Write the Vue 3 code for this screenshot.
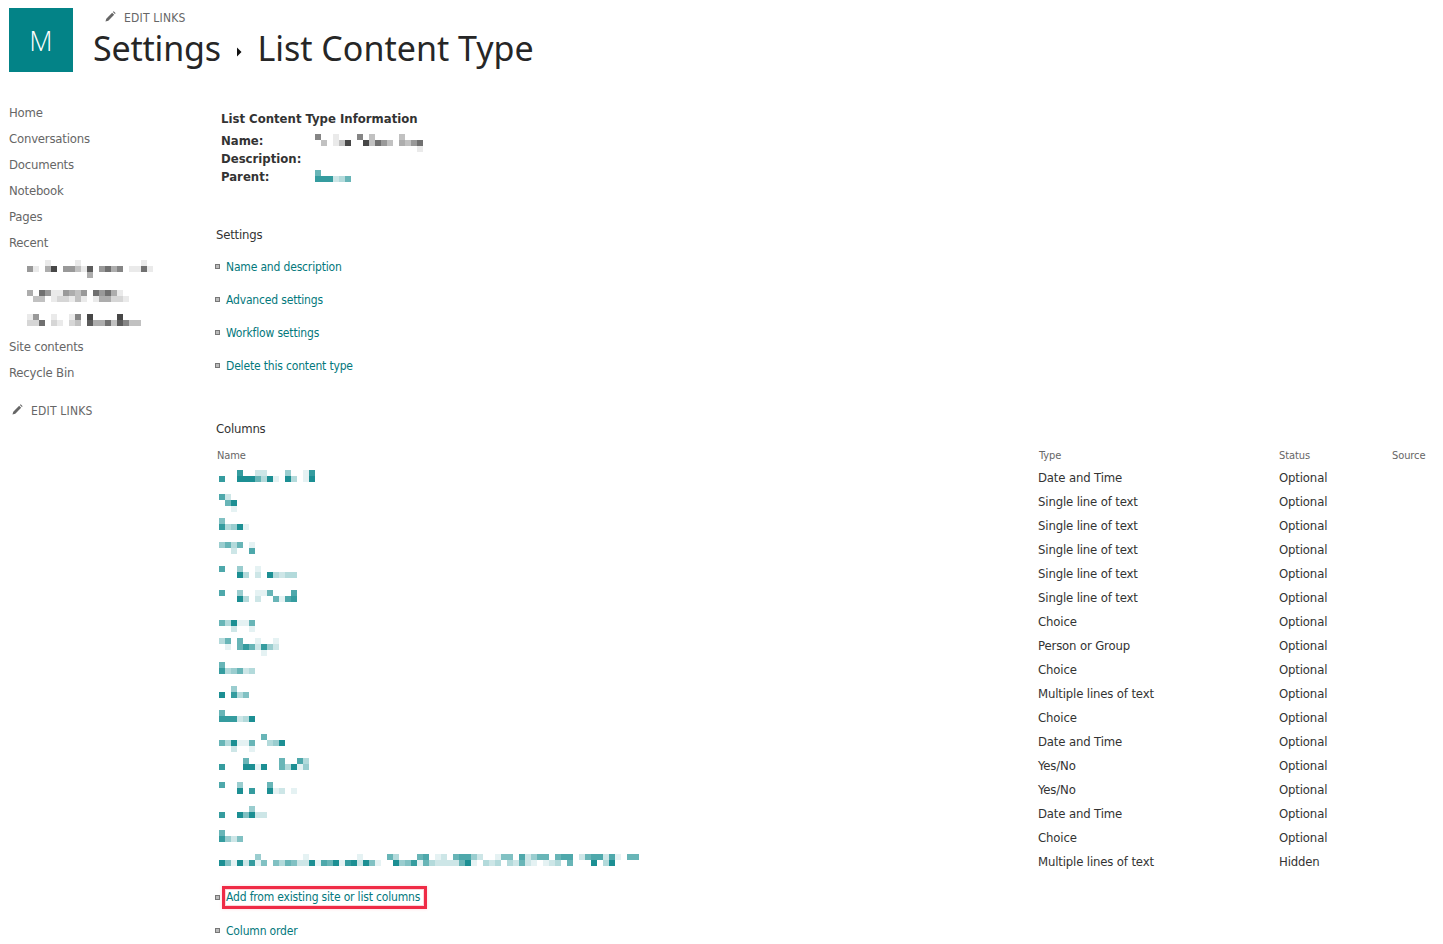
<template>
  <div class="page">
    <header class="top">
      <div class="logo">M</div>
      <div class="top-text">
        <div class="top-edit">
          <svg class="pencil" viewBox="0 0 12 12"><path d="M0.5 11.5 L1.4 8.4 L7.8 2 L10 4.2 L3.6 10.6 Z M8.6 1.2 L9.5 0.4 L11.6 2.5 L10.8 3.4 Z" /></svg>
          <span>EDIT LINKS</span>
        </div>
        <h1 class="title">
          <span class="title-first">Settings</span>
          <svg class="crumb" viewBox="0 0 6 10"><path d="M1 0.5 L5.5 5 L1 9.5 Z" /></svg>
          <span>List Content Type</span>
        </h1>
      </div>
    </header>

    <div class="body">
      <nav class="side">
        <a v-for="item in navTop" :key="item" class="side-link">{{ item }}</a>
        <div class="side-recent">
          <div v-for="(line, j) in recent" :key="j" class="px-line">
            <i v-for="(c, k) in line" :key="k" class="px" :style="{ background: pixel(c, '51,51,51') }"></i>
          </div>
        </div>
        <a v-for="item in navBottom" :key="item" class="side-link">{{ item }}</a>
        <div class="side-edit">
          <svg class="pencil" viewBox="0 0 12 12"><path d="M0.5 11.5 L1.4 8.4 L7.8 2 L10 4.2 L3.6 10.6 Z M8.6 1.2 L9.5 0.4 L11.6 2.5 L10.8 3.4 Z" /></svg>
          <span>EDIT LINKS</span>
        </div>
      </nav>

      <main class="content">
        <section class="info">
          <h2>List Content Type Information</h2>
          <div class="info-row">
            <b>Name:</b>
            <div class="px-block">
              <div v-for="(line, j) in nameBlur" :key="j" class="px-line">
                <i v-for="(c, k) in line" :key="k" class="px" :style="{ background: pixel(c, '51,51,51') }"></i>
              </div>
            </div>
          </div>
          <div class="info-row"><b>Description:</b></div>
          <div class="info-row">
            <b>Parent:</b>
            <div class="px-block">
              <div v-for="(line, j) in parentBlur" :key="j" class="px-line">
                <i v-for="(c, k) in line" :key="k" class="px" :style="{ background: pixel(c, '3,131,135') }"></i>
              </div>
            </div>
          </div>
        </section>

        <h3 class="section settings-head">Settings</h3>
        <ul class="links">
          <li v-for="l in settingsLinks" :key="l"><a>{{ l }}</a></li>
        </ul>

        <h3 class="section columns-head">Columns</h3>
        <table class="cols">
          <thead>
            <tr>
              <th class="c-name">Name</th>
              <th class="c-type">Type</th>
              <th class="c-status">Status</th>
              <th>Source</th>
            </tr>
          </thead>
          <tbody>
            <tr v-for="(row, i) in rows" :key="i">
              <td class="name-cell">
                <div v-for="(line, j) in row.name" :key="j" class="px-line">
                  <i v-for="(c, k) in line" :key="k" class="px" :style="{ background: pixel(c, '3,131,135') }"></i>
                </div>
              </td>
              <td>{{ row.type }}</td>
              <td>{{ row.status }}</td>
              <td></td>
            </tr>
          </tbody>
        </table>

        <ul class="links bottom-links">
          <li><a class="marked">Add from existing site or list columns</a></li>
          <li><a>Column order</a></li>
        </ul>
      </main>
    </div>
  </div>
</template>

<script setup>
const navTop = ['Home', 'Conversations', 'Documents', 'Notebook', 'Pages', 'Recent']
const navBottom = ['Site contents', 'Recycle Bin']
const settingsLinks = ['Name and description', 'Advanced settings', 'Workflow settings', 'Delete this content type']

// Names are pixelated in the source, one digit per 6px cell (opacity in tenths)
const recent = [
  '00010000100000000001',
  '510490553180574601171',
  '00000000004',
  '',
  '',
  '4075115435075741',
  '03301221310144221',
  '',
  '',
  '1500100160900009',
  '2270210230844738633'
]
const nameBlur = ['600100060300003', '030139009375304357', '000000000000000001']
const parentBlur = ['6', '888236']

const rows = [
  { name: ['0008002200040018', '8009996391093019'], type: 'Date and Time' },
  { name: ['72', '069', '001'], type: 'Single line of text' },
  { name: ['5', '83491'], type: 'Single line of text' },
  { name: ['463601', '002007'], type: 'Single line of text' },
  { name: ['7004001', '0009302093233'], type: 'Single line of text' },
  { name: ['7004001160007', '0009302006178'], type: 'Single line of text' },
  { name: ['0', '639116', '002001'], type: 'Choice' },
  { name: ['3606001001', '0106862842', '00000001'], type: 'Person or Group' },
  { name: ['6', '834623'], type: 'Choice' },
  { name: ['004', '90835'], type: 'Multiple lines of text' },
  { name: ['6', '888239'], type: 'Choice' },
  { name: ['00000006', '63911600349', '002001'], type: 'Date and Time' },
  { name: ['000060000060073', '800099190063914'], type: 'Yes/No' },
  { name: ['700400006', '0009080091201'], type: 'Yes/No' },
  { name: ['000004', '80095922'], type: 'Date and Time' },
  { name: ['6', '8425'], type: 'Choice' },
  {
    name: [
      '0000004000000010000000010000630006701206774200155072466067702677271066',
      '9519281505365229176918929510094581632222691032303262101230600090390'
    ],
    type: 'Multiple lines of text',
    status: 'Hidden'
  }
].map((r) => ({ status: 'Optional', ...r }))

function pixel(c, rgb) {
  return `rgba(${rgb},${Number(c) / 10})`
}
</script>

<style scoped>
.page {
  width: 1443px;
  height: 944px;
  overflow: hidden;
  background: #fff;
  font-family: 'DejaVu Sans', sans-serif;
  font-stretch: condensed;
  color: #333;
}

.top {
  display: flex;
  padding: 8px 0 0 9px;
  height: 96px;
  box-sizing: border-box;
}

.logo {
  width: 64px;
  height: 64px;
  background: #038387;
  color: #fff;
  font-family: 'Open Sans', sans-serif;
  font-stretch: normal;
  font-weight: 300;
  font-size: 27px;
  line-height: 66px;
  text-align: center;
}

.top-text {
  margin-left: 20px;
}

.top-edit,
.side-edit {
  display: flex;
  align-items: center;
  gap: 8px;
  font-size: 12px;
  letter-spacing: 0.2px;
  color: #666;
}

.top-edit {
  height: 20px;
  margin-left: 12px;
}

.pencil {
  width: 11px;
  height: 11px;
  fill: #666;
  margin-top: -3px;
}

.title {
  margin: -2px 0 0;
  display: flex;
  align-items: center;
  gap: 15.3px;
  font-family: 'Noto Sans', sans-serif;
  font-stretch: normal;
  font-weight: 400;
  font-size: 34px;
  line-height: 44px;
  color: #262626;
}

.title-first {
  letter-spacing: -0.2px;
}

.crumb {
  width: 6px;
  height: 10px;
  fill: #111;
  margin-top: 8px;
}

.body {
  display: flex;
  padding-top: 4px;
}

.side {
  width: 216px;
  flex: none;
  padding: 0 0 0 9px;
  box-sizing: border-box;
}

.side-link {
  display: block;
  height: 26px;
  line-height: 26px;
  font-size: 13px;
  letter-spacing: -0.2px;
  color: #666;
}

.side-recent {
  height: 78px;
  padding: 4px 0 0 18px;
  box-sizing: border-box;
}

.side-edit {
  margin: 12px 0 0 3px;
  height: 26px;
}

.px-line {
  display: flex;
  height: 6px;
}

.px {
  display: block;
  width: 6px;
  height: 6px;
  flex: none;
}

.content {
  flex: 1;
  min-width: 0;
}

.info {
  padding: 10px 0 0 5px;
}

.info h2 {
  margin: 0 0 4px;
  font-size: 13px;
  line-height: 18px;
  font-weight: 700;
}

.info-row {
  display: flex;
  height: 18px;
  font-size: 13px;
  line-height: 18px;
}

.info-row b {
  width: 94px;
  flex: none;
}

.px-block {
  padding-top: 2px;
}

.section {
  margin: 0;
  font-size: 13px;
  line-height: 18px;
  font-weight: 400;
  letter-spacing: -0.2px;
}

.settings-head {
  margin-top: 40px;
}

.links {
  list-style: none;
  margin: 6px 0 0 -1px;
  padding: 0;
}

.links li {
  display: flex;
  align-items: center;
  height: 33px;
  font-size: 12px;
  letter-spacing: -0.17px;
  color: #03787c;
}

.links li::before {
  content: '';
  width: 3px;
  height: 3px;
  margin-right: 6px;
  background: #bbb;
  border: 1px solid #777;
  flex: none;
}

.marked {
  display: inline-block;
  line-height: 15px;
  padding-right: 3px;
  outline: 3px solid #ef2b46;
  outline-offset: 1px;
  box-shadow: 0 0 3px 4px rgba(239, 43, 70, 0.2);
}

.columns-head {
  margin-top: 38px;
}

.cols {
  border-collapse: collapse;
  table-layout: fixed;
  width: 1227px;
  margin: 8px 0 0 1px;
}

.cols th {
  height: 24px;
  box-sizing: border-box;
  padding: 0 0 6px;
  text-align: left;
  font-size: 11px;
  font-weight: 400;
  letter-spacing: -0.1px;
  color: #666;
}

.cols th.c-type {
  padding-left: 1px;
}

.c-name {
  width: 821px;
}

.c-type {
  width: 241px;
}

.c-status {
  width: 113px;
}

.cols td {
  height: 24px;
  box-sizing: border-box;
  padding: 0;
  vertical-align: top;
  font-size: 13px;
  line-height: 16px;
  letter-spacing: -0.15px;
  color: #333;
}

.cols td.name-cell {
  padding: 0 0 0 2px;
}

.bottom-links {
  margin-top: 3px;
}
</style>
